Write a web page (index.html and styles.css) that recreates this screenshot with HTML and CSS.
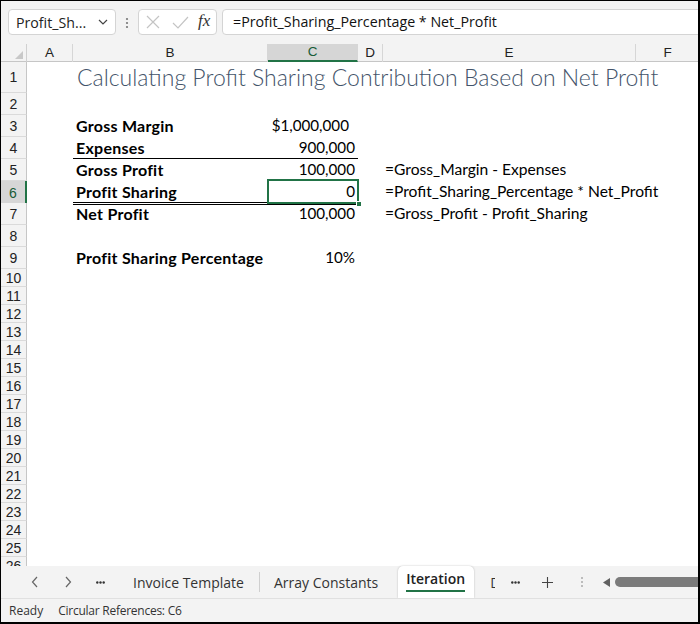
FILE: index.html
```html
<!DOCTYPE html>
<html>
<head>
<meta charset="utf-8">
<link rel="stylesheet" href="styles.css">
</head>
<body>
<div class="app">
  <div class="toolbar">
    <div class="namebox">
      <span class="nb-text">Profit_Sh...</span>
      <svg class="chev" width="10" height="6" viewBox="0 0 10 6"><path d="M1 1 L5 5 L9 1" fill="none" stroke="#444" stroke-width="1.2"/></svg>
    </div>
    <svg class="vdots" width="4" height="12" viewBox="0 0 4 12"><circle cx="2" cy="2" r="1.1" fill="#777"/><circle cx="2" cy="6" r="1.1" fill="#777"/><circle cx="2" cy="10" r="1.1" fill="#777"/></svg>
    <div class="fxbox">
      <svg class="ico-x" width="14" height="14" viewBox="0 0 14 14"><path d="M1 1 L13 13 M13 1 L1 13" stroke="#c4c4c4" stroke-width="1.2" fill="none"/></svg>
      <svg class="ico-ok" width="17" height="13" viewBox="0 0 17 13"><path d="M1 7 L6 12 L16 1" stroke="#c4c4c4" stroke-width="1.2" fill="none"/></svg>
      <span class="fx">fx</span>
    </div>
    <div class="formula">=Profit_Sharing_Percentage * Net_Profit</div>
  </div>

  <div class="sheet">
    <div class="row hdr">
      <div class="corner"><svg width="8" height="8" viewBox="0 0 8 8"><path d="M8 0 L8 8 L0 8 Z" fill="#c8c8c8"/></svg></div>
      <div class="ch">A</div>
      <div class="ch">B</div>
      <div class="ch sel">C</div>
      <div class="ch">D</div>
      <div class="ch">E</div>
      <div class="ch last">F</div>
    </div>
    <div class="row r1">
      <div class="rh">1</div><div></div>
      <div class="title">Calculating Profit Sharing Contribution Based on Net Profit</div>
    </div>
    <div class="row r2"><div class="rh">2</div></div>
    <div class="row r2">
      <div class="rh">3</div><div></div>
      <div class="lbl">Gross Margin</div>
      <div class="num cur">$1,000,000</div>
    </div>
    <div class="row r2">
      <div class="rh">4</div><div></div>
      <div class="lbl under">Expenses</div>
      <div class="num under">900,000</div>
    </div>
    <div class="row r2">
      <div class="rh">5</div><div></div>
      <div class="lbl">Gross Profit</div>
      <div class="num">100,000</div>
      <div></div>
      <div class="fml">=Gross_Margin - Expenses</div>
    </div>
    <div class="row r2">
      <div class="rh rsel">6</div><div></div>
      <div class="lbl dbl">Profit Sharing</div>
      <div class="num dbl active">0<span class="selbox"></span><span class="handle"></span></div>
      <div></div>
      <div class="fml">=Profit_Sharing_Percentage * Net_Profit</div>
    </div>
    <div class="row r2">
      <div class="rh">7</div><div></div>
      <div class="lbl">Net Profit</div>
      <div class="num">100,000</div>
      <div></div>
      <div class="fml">=Gross_Profit - Profit_Sharing</div>
    </div>
    <div class="row r2"><div class="rh">8</div></div>
    <div class="row r2">
      <div class="rh">9</div><div></div>
      <div class="lbl">Profit Sharing Percentage</div>
      <div class="num">10%</div>
    </div>
    <div class="row r3"><div class="rh">10</div></div>
    <div class="row r3"><div class="rh">11</div></div>
    <div class="row r3"><div class="rh">12</div></div>
    <div class="row r3"><div class="rh">13</div></div>
    <div class="row r3"><div class="rh">14</div></div>
    <div class="row r3"><div class="rh">15</div></div>
    <div class="row r3"><div class="rh">16</div></div>
    <div class="row r3"><div class="rh">17</div></div>
    <div class="row r3"><div class="rh">18</div></div>
    <div class="row r3"><div class="rh">19</div></div>
    <div class="row r3"><div class="rh">20</div></div>
    <div class="row r3"><div class="rh">21</div></div>
    <div class="row r3"><div class="rh">22</div></div>
    <div class="row r3"><div class="rh">23</div></div>
    <div class="row r3"><div class="rh">24</div></div>
    <div class="row r3"><div class="rh">25</div></div>
    <div class="row r3"><div class="rh">26</div></div>
  </div>

  <div class="tabbar">
    <svg class="nav prev" width="8" height="12" viewBox="0 0 8 12"><path d="M6 1 L1.5 6 L6 11" fill="none" stroke="#666" stroke-width="1.2"/></svg>
    <svg class="nav next" width="8" height="12" viewBox="0 0 8 12"><path d="M2 1 L6.5 6 L2 11" fill="none" stroke="#666" stroke-width="1.2"/></svg>
    <svg class="more" width="9" height="3" viewBox="0 0 9 3"><circle cx="1.3" cy="1.5" r="1.2" fill="#333"/><circle cx="4.5" cy="1.5" r="1.2" fill="#333"/><circle cx="7.7" cy="1.5" r="1.2" fill="#333"/></svg>
    <span class="tab t1">Invoice Template</span>
    <span class="sep"></span>
    <span class="tab t2">Array Constants</span>
    <div class="tab active"><span class="act-text">Iteration</span></div>
    <span class="cut">D</span>
    <svg class="more more2" width="9" height="3" viewBox="0 0 9 3"><circle cx="1.3" cy="1.5" r="1.2" fill="#333"/><circle cx="4.5" cy="1.5" r="1.2" fill="#333"/><circle cx="7.7" cy="1.5" r="1.2" fill="#333"/></svg>
    <svg class="plus" width="11" height="11" viewBox="0 0 11 11"><path d="M5.5 0 V11 M0 5.5 H11" stroke="#444" stroke-width="1.1"/></svg>
    <svg class="vdots2" width="4" height="12" viewBox="0 0 4 12"><circle cx="2" cy="2" r="1" fill="#aaa"/><circle cx="2" cy="6" r="1" fill="#aaa"/><circle cx="2" cy="10" r="1" fill="#aaa"/></svg>
    <svg class="larrow" width="7" height="9" viewBox="0 0 7 9"><path d="M7 0 L0 4.5 L7 9 Z" fill="#606060"/></svg>
    <div class="thumb"></div>
  </div>

  <div class="status">
    <span class="st-ready">Ready</span>
    <span class="st-circ">Circular References: C6</span>
  </div>
</div>
</body>
</html>
```
FILE: styles.css
```css
* { box-sizing: border-box; }
body { margin: 0; background: #fff; }

.app {
  width: 700px;
  height: 624px;
  border-style: solid;
  border-color: #000;
  border-width: 1px 2px 2px 1px;
  display: flex;
  flex-direction: column;
  overflow: hidden;
  background: #fff;
  font-family: "Open Sans", "Noto Sans", sans-serif;
  color: #222;
}

/* toolbar */
.toolbar {
  height: 43px;
  flex: none;
  background: #f3f3f3;
  display: flex;
  align-items: flex-start;
  padding: 8px 0 0 7px;
}
.namebox {
  width: 108px;
  height: 26px;
  background: #fff;
  border: 1px solid #d4d4d4;
  border-radius: 4px;
  display: flex;
  align-items: center;
  padding-left: 7px;
  font-size: 14.2px;
  color: #222;
}
.nb-text { flex: 1; }
.chev { margin-right: 7px; }
.vdots { margin: 8px 0 0 9px; }
.fxbox {
  margin-left: 9px;
  width: 79px;
  height: 26px;
  background: #fff;
  border: 1px solid #d4d4d4;
  border-radius: 4px;
  display: flex;
  align-items: center;
  padding-left: 7px;
}
.ico-ok { margin-left: 12px; }
.fx {
  margin-left: 9px;
  font-family: "Liberation Serif", serif;
  font-style: italic;
  font-size: 17px;
  color: #333;
  margin-top: -2px;
}
.formula {
  flex: 1;
  margin-left: 5px;
  margin-right: -6px;
  height: 26px;
  background: #fff;
  border: 1px solid #d4d4d4;
  border-radius: 4px;
  padding-left: 10px;
  font-size: 14.25px;
  line-height: 24px;
  color: #111;
}

/* sheet */
.sheet {
  flex: 1;
  overflow: hidden;
  background: #fff;
  font-family: "Lato", "Liberation Sans", sans-serif;
}
.row {
  display: grid;
  grid-template-columns: 26px 46px 195px 90px 25px 253px 63px;
  height: 22px;
}
.row.r1 { height: 31px; }
.row.r3 { height: 18px; }
.row.hdr {
  height: 18px;
  background: #f3f3f3;
  border-bottom: 1px solid #c6c6c6;
}
.corner {
  display: flex;
  align-items: flex-end;
  justify-content: flex-end;
  padding: 0 3px 3px 0;
  border-right: 1px solid #d0d0d0;
}
.ch {
  font-family: "Liberation Sans", Arial, sans-serif;
  font-size: 13.5px;
  color: #222;
  text-align: center;
  line-height: 17px;
  border-right: 1px solid #d6d6d6;
}
.ch.last { border-right: none; }
.ch.sel {
  background: #d6d6d6;
  color: #185c37;
  border-bottom: 2px solid #217346;
  line-height: 16px;
}

.rh {
  background: #f3f3f3;
  border-right: 1px solid #c6c6c6;
  border-bottom: 1px solid #dadada;
  font-family: "Liberation Sans", Arial, sans-serif;
  font-size: 14px;
  color: #222;
  text-align: center;
  display: flex;
  align-items: center;
  justify-content: center;
}
.rh.rsel {
  background: #d6d6d6;
  border-right: 2px solid #217346;
  color: #185c37;
}

.title {
  white-space: nowrap;
  overflow: visible;
  font-family: "Lato", sans-serif;
  font-weight: 300;
  font-size: 23px;
  color: #44546a;
  padding-left: 4px;
  line-height: 31px;
}

.lbl, .num, .fml {
  font-size: 15.6px;
  line-height: 21px;
  color: #000;
  white-space: nowrap;
}
.lbl {
  font-weight: 700;
  font-size: 16px;
  letter-spacing: 0.25px;
  padding-left: 3px;
  overflow: visible;
}
.num { text-align: right; padding-right: 3px; position: relative; font-size: 15.2px; }
.num.cur { padding-right: 9px; }
.fml { padding-left: 2px; }
.under { border-bottom: 1px solid #000; }
.dbl { border-bottom: 3px double #000; }

.selbox {
  position: absolute;
  left: -1px;
  top: -2px;
  right: -1px;
  bottom: -2px;
  border: 2px solid #217346;
}
.handle {
  position: absolute;
  width: 6px;
  height: 6px;
  right: -4px;
  bottom: -5px;
  background: #217346;
  border: 1px solid #fff;
}

/* tab bar */
.tabbar {
  height: 32px;
  flex: none;
  background: #f3f3f3;
  display: flex;
  align-items: center;
  font-size: 14px;
  color: #333;
}
.nav.prev { margin-left: 30px; }
.nav.next { margin-left: 25px; }
.more { margin-left: 24px; }
.tab.t1 { margin-left: 28px; }
.sep {
  width: 1px;
  height: 20px;
  background: #cfcfcf;
  margin-left: 15px;
}
.tab.t2 { margin-left: 14px; }
.tab.active {
  margin-left: 20px;
  align-self: stretch;
  width: 76px;
  flex: none;
  background: #fff;
  border-radius: 5px 5px 0 0;
  box-shadow: 0 0 2px rgba(0,0,0,0.25);
  padding: 3px 0 0 8px;
}
.act-text {
  display: inline-block;
  font-weight: 600;
  color: #222;
  border-bottom: 2px solid #217346;
  line-height: 20px;
  padding-bottom: 1px;
}
.cut {
  width: 5px;
  flex: none;
  overflow: hidden;
  margin-left: 16px;
  color: #333;
}
.more2 { margin-left: 16px; }
.plus { margin-left: 22px; }
.vdots2 { margin-left: 27px; }
.larrow { margin-left: 19px; }
.thumb {
  margin-left: 5px;
  flex: 1;
  height: 10px;
  background: #7b7b7b;
  border-radius: 5px 0 0 5px;
}

/* status bar */
.status {
  height: 24px;
  flex: none;
  background: #f3f3f3;
  border-top: 1px solid #e0e0e0;
  display: flex;
  align-items: center;
  padding-left: 8px;
  font-size: 12px;
  color: #333;
}
.st-circ { margin-left: 15px; letter-spacing: -0.25px; }
```
